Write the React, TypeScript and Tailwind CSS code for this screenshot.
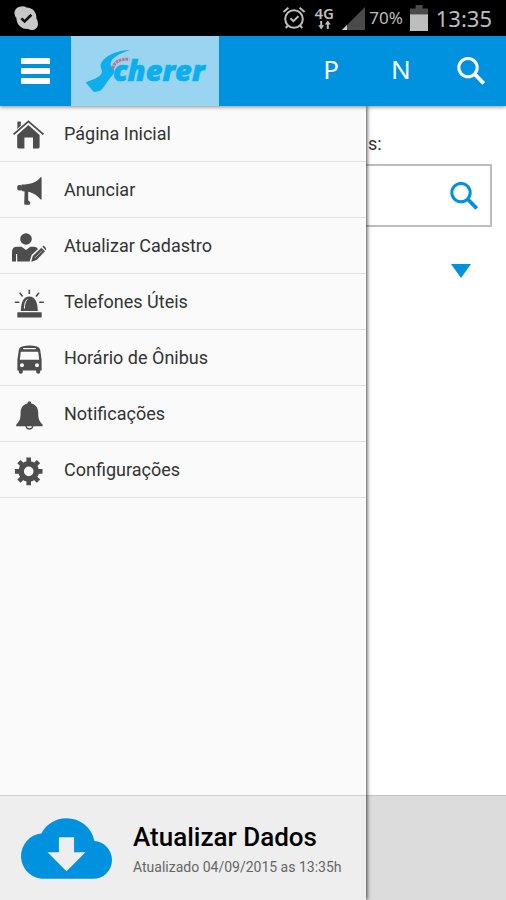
import type { ReactNode } from "react";
import { MdCloudDownload } from "react-icons/md";

function MenuIcon({ children }: { children: ReactNode }) {
  return (
    <svg viewBox="0 0 34 34" className="h-[34px] w-[34px] shrink-0 text-[#4d4d4d]" fill="currentColor" aria-hidden="true">
      {children}
    </svg>
  );
}

function SearchIcon() {
  return (
    <svg viewBox="0 0 28 28" className="h-7 w-7" fill="none" stroke="currentColor" aria-hidden="true">
      <circle cx="11" cy="10.6" r="9.2" strokeWidth="3" />
      <path d="M17.6 17.2 26.8 26.4" strokeWidth="3.8" />
    </svg>
  );
}

const menu = [
  {
    label: "Página Inicial",
    icon: (
      <MenuIcon>
        <path d="M5.4 4.6h3.4v4L5.4 12z" />
        <path d="M1.6 17.4 16.4 4.4 31.4 17.4" fill="none" stroke="currentColor" strokeWidth="1.9" />
        <path d="M16.4 8 27.6 18V30q0 1.4-1.4 1.4H21V20.4h-8.6v11H6.6q-1.4 0-1.4-1.4V18z" />
      </MenuIcon>
    ),
  },
  {
    label: "Anunciar",
    icon: (
      <MenuIcon>
        <path d="M28.6 4.2h1v22.4h-1c-3.6-4.2-6.8-6.6-12.4-7.8v8.4l2.2 2.4-.8 2.2h-4.2q-1.2 0-1.2-1.2l.4-12.2-3-.4V11.6c9.4-.2 15-2.6 19-7.4z" />
        <rect x="5.2" y="12" width="5" height="5.4" rx="2" />
      </MenuIcon>
    ),
  },
  {
    label: "Atualizar Cadastro",
    icon: (
      <MenuIcon>
        <circle cx="14" cy="10" r="5.8" />
        <path d="M0 32.4V23q0-5.2 5-5.2h4.6l4.4 3.2 4.4-3.2H22q2.4 0 4 2.2L19.6 26l-2 6.4H5.2V25H4v7.4z" />
        <path d="M19.2 32.8 20.8 27 29.4 18.8 33 22.2 24.6 31z" />
        <path d="M30.4 17.8 31.6 16.6 35 20 33.9 21.2z" />
        <path d="M22.8 29 30.2 21.6" stroke="#fafafa" strokeWidth=".6" />
      </MenuIcon>
    ),
  },
  {
    label: "Telefones Úteis",
    icon: (
      <MenuIcon>
        <rect x="5.3" y="27.2" width="24.4" height="5.2" rx=".6" />
        <path d="M8.8 26C9 17 11.6 11.6 17.3 11.6S25.6 17 25.8 26z" />
        <path d="M12.4 23.6c0-4.6 1-7.4 3-9.2" fill="none" stroke="#fafafa" strokeWidth="1" />
        <path d="M17.3 4.8V9M7.6 7.8l3 3.6M27 7.8l-3 3.6M2.8 17.2H7.4M27.2 17.2H31.8" fill="none" stroke="currentColor" strokeWidth="1.6" />
      </MenuIcon>
    ),
  },
  {
    label: "Horário de Ônibus",
    icon: (
      <MenuIcon>
        <path
          fillRule="evenodd"
          d="M10 5.4q7.5-1.8 15 0 2.8.6 3.2 3.6L29.6 19v10.6h-1.4V31q0 1.8-2 1.8t-2-1.8v-1.4H10.8V31q0 1.8-2 1.8t-2-1.8v-1.4H5.4V19L6.8 9q.4-3 3.2-3.6zM11.2 7v1.2h12.6V7zM8.8 10.8 7.8 18.8h19.4l-1-8zM10 22.2a2 2 0 1 0 0 4 2 2 0 0 0 0-4zM25 22.2a2 2 0 1 0 0 4 2 2 0 0 0 0-4z"
        />
      </MenuIcon>
    ),
  },
  {
    label: "Notificações",
    icon: (
      <MenuIcon>
        <path d="M17.4 4.2q1.6 0 2 2.4c4.6 1.2 6.8 4.6 6.8 9 0 6 .8 8.4 4.4 12.2v1.4H4.2v-1.4c3.6-3.8 4.4-6.2 4.4-12.2 0-4.4 2.2-7.8 6.8-9q.4-2.4 2-2.4z" />
        <path d="M14 29.2q.6 2.8 3.4 2.8t3.4-2.8" fill="none" stroke="currentColor" strokeWidth="1.4" />
      </MenuIcon>
    ),
  },
  {
    label: "Configurações",
    icon: (
      <MenuIcon>
        <circle cx="16.7" cy="18.4" r="7.6" fill="none" stroke="currentColor" strokeWidth="5.6" />
        <path
          d="M16.7 4.6V9M16.7 27.8V32.2M2.9 18.4H7.3M26.1 18.4H30.5M6.9 8.6 10 11.7M23.4 25.1 26.5 28.2M6.9 28.2 10 25.1M23.4 11.7 26.5 8.6"
          stroke="currentColor"
          strokeWidth="4.6"
        />
      </MenuIcon>
    ),
  },
];

function StatusBar() {
  return (
    <div className="flex h-9 items-center bg-black px-[14px] font-['Noto_Sans',sans-serif] text-[#bdbdbd]">
      <svg viewBox="0 0 25 25" className="h-[25px] w-[25px]" aria-hidden="true">
        <path
          fill="#c8c8c8"
          d="M7 .6q3-.8 5.4 1 5 0 8 3.6 2.4 3.2 2 7.4 2.2 3.4 1.4 7-1.4 4.8-6.4 4.4-1.8-.2-3-1-4.8.6-8.2-2.4-3.8-3.4-3.8-8.6Q-.2 8.6.6 5.4 2 1.4 7 .6z"
        />
        <path d="M7.4 12.4 10.6 15.4 17.4 8.8" fill="none" stroke="#111" strokeWidth="2.6" />
      </svg>

      <div className="ml-auto flex items-center">
        <svg viewBox="0 0 24 24" className="mr-2 h-6 w-6" fill="none" stroke="currentColor" strokeWidth="2" aria-hidden="true">
          <circle cx="12" cy="13" r="8.8" />
          <path d="M1.4 6 6.4 1.8M22.6 6 17.6 1.8M8.4 12.2l3 3 5-5M5.6 19.8 3.8 22M18.4 19.8 20.2 22" />
        </svg>
        <div className="mr-2 flex w-5 flex-col items-center">
          <span className="text-[15px] leading-[14px] font-semibold">4G</span>
          <svg viewBox="0 0 13 10" className="h-[10px] w-[13px]" fill="currentColor" aria-hidden="true">
            <path d="M2.2 1h2v4.2h2L3.2 9.4.2 5.2h2zM8.8 9h2V4.6h2L9.8.4l-3 4.2h2z" />
          </svg>
        </div>
        <svg viewBox="0 0 23 23" className="mr-1 h-[23px] w-[23px]" aria-hidden="true">
          <path d="M23 0V23H0z" fill="#4a4a4a" />
          <path d="M5 18v5H0z" fill="#d0d0d0" />
        </svg>
        <span className="mr-[7px] text-[17px] leading-6">70%</span>
        <svg viewBox="0 0 18 26" className="mr-2 h-[26px] w-[18px]" aria-hidden="true">
          <path d="M5.6 0h7v3.4H18V10H0V3.4h5.6z" fill="#4a4a4a" />
          <path d="M0 9.4h18V26H0z" fill="#bdbdbd" />
        </svg>
        <span className="text-[22px] leading-6">13:35</span>
      </div>
    </div>
  );
}

function Logo() {
  return (
    <a href="#" aria-label="Scherer" className="flex h-full w-[148px] items-center justify-center bg-[#99d5f1]">
      <svg viewBox="0 0 148 70" className="h-[70px] w-[148px]" aria-hidden="true">
        <path
          fill="#0caeee"
          d="M59 14C48 14.6 40 17.4 35 21.6c-3.6 3-6 6-5.4 9 .4 2.4 1.8 4 1.2 6.2-1.2 4.2-9 7-16.1 9.6l8.2 9.6c2 .4 4-1 6.1-1.2 4-3 5.6-6.8 8.3-10.6 2.6-3.4 5.4-5.4 6-8.6.6-3.4-4-4.4-3.8-7.8.2-5.6 9.5-10.6 19.5-13.8z"
        />
        <path d="M41.8 32.4C43 26.4 48 22.8 58.4 23.2" fill="none" stroke="#c56f86" strokeWidth="3" strokeDasharray="2.6 .8" />
        <text x="42" y="44.6" fontSize="29" fontWeight="800" fontStyle="italic" fontFamily="'Open Sans', sans-serif" fill="#0caeee" stroke="#0caeee" strokeWidth=".6">
          cherer
        </text>
      </svg>
    </a>
  );
}

function Header() {
  return (
    <header className="relative z-20 flex h-[70px] items-center bg-[#0092df] text-white shadow-[0_1px_4px_rgba(0,0,0,0.45)]">
      <button type="button" aria-label="Menu" className="flex h-full w-[71px] flex-col items-center justify-center gap-1">
        <span className="h-[6px] w-[29px] rounded-[1px] bg-white" />
        <span className="h-[6px] w-[29px] rounded-[1px] bg-white" />
        <span className="h-[6px] w-[29px] rounded-[1px] bg-white" />
      </button>
      <Logo />
      <nav className="ml-auto flex h-full font-['Noto_Sans',sans-serif] text-[26px]">
        <button type="button" className="w-[70px] pb-1">P</button>
        <button type="button" className="w-[70px] pb-1">N</button>
        <button type="button" aria-label="Buscar" className="flex w-[70px] items-center justify-center">
          <SearchIcon />
        </button>
      </nav>
    </header>
  );
}

export default function App() {
  return (
    <div className="flex min-h-screen flex-col bg-white font-[Roboto,sans-serif] text-[#333]">
      <StatusBar />
      <Header />

      <div className="flex flex-1">
        {/* Drawer */}
        <aside className="relative z-10 flex w-[366px] max-w-[80%] shrink-0 flex-col bg-[#fafafa] shadow-[1px_0_4px_rgba(0,0,0,0.75)]">
          <ul>
            {menu.map((item) => (
              <li key={item.label} className="border-b border-[#dedede]">
                <a href="#" className="flex h-[55px] items-center gap-[18px] pl-3 text-[18px]">
                  {item.icon}
                  {item.label}
                </a>
              </li>
            ))}
          </ul>

          <button type="button" className="mt-auto flex h-[105px] items-center border-t border-[#cfcfcf] bg-[#eee] pl-[21px] text-left">
            <MdCloudDownload className="h-[91px] w-[91px] shrink-0 text-[#0092df]" />
            <span className="ml-[21px] flex flex-col gap-1 pt-[2px]">
              <span className="text-[26px] leading-8 font-medium text-black">Atualizar Dados</span>
              <span className="text-[14px] leading-5 text-[#666]">Atualizado 04/09/2015 as 13:35h</span>
            </span>
          </button>
        </aside>

        {/* Page behind the drawer */}
        <main className="flex min-w-0 flex-1 flex-col">
          <label htmlFor="search" className="mt-7 pl-[2px] text-[18px] leading-5">s:</label>
          <div className="mt-[10px] mr-[14px] flex h-[63px] items-center border-2 border-l-0 border-[#bdbdbd] pr-3">
            <input id="search" type="text" className="h-full min-w-0 flex-1 outline-none" />
            <button type="button" aria-label="Pesquisar" className="text-[#0092df]">
              <SearchIcon />
            </button>
          </div>
          <button type="button" aria-label="Expandir" className="mt-[37px] mr-[35px] self-end">
            <svg viewBox="0 0 20 14" className="h-[14px] w-5" aria-hidden="true">
              <path d="M0 0H20L10 14z" fill="#0092df" />
            </svg>
          </button>
          <footer className="mt-auto h-[105px] border-t border-[#c4c4c4] bg-[#dcdcdc]" />
        </main>
      </div>
    </div>
  );
}
